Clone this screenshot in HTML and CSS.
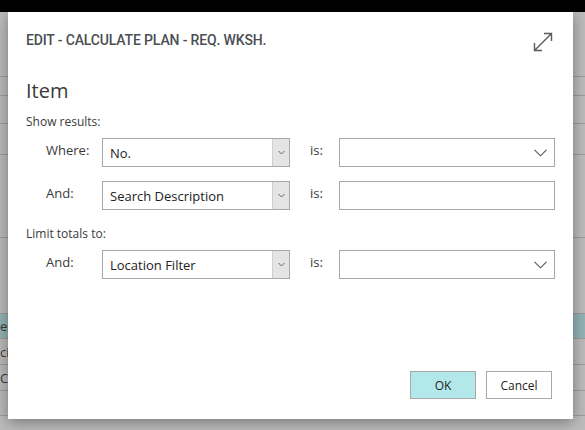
FILE: index.html
```html
<!DOCTYPE html>
<html>
<head>
<meta charset="utf-8">
<link rel="stylesheet" href="styles.css">
</head>
<body>
<div class="topbar"></div>
<div class="backdrop">
  <div class="brow h65"></div>
  <div class="brow h19"></div>
  <div class="brow h28"></div>
  <div class="brow h31"></div>
  <div class="brow h83"></div>
  <div class="brow h76"></div>
  <div class="brow h25 sel"><span class="btext">es</span></div>
  <div class="brow h26"><span class="btext">cia</span></div>
  <div class="brow h26"><span class="btext">C</span></div>
  <div class="brow h25"></div>
</div>

<div class="dialog">
  <div class="dhead">
    <div class="dtitle">EDIT - CALCULATE PLAN - REQ. WKSH.</div>
    <svg class="expand" width="22" height="22" viewBox="0 0 22 22">
      <path d="M2.5 19.5 L19.5 2.5 M12 2.5 H19.5 V10 M2.5 12 V19.5 H10" fill="none" stroke="#5a5a5a" stroke-width="1.4"/>
    </svg>
  </div>
  <div class="section-title">Item</div>
  <div class="group-label">Show results:</div>
  <div class="frow">
    <span class="flabel">Where:</span>
    <div class="select"><span class="sval">No.</span><span class="sbtn"><svg width="7" height="5" viewBox="0 0 7 5"><path d="M0.5 1 L3.5 4 L6.5 1" fill="none" stroke="#666" stroke-width="1"/></svg></span></div>
    <span class="islabel">is:</span>
    <div class="vbox"><svg class="chev" width="13" height="8" viewBox="0 0 13 8"><path d="M0.5 0.8 L6.5 6.8 L12.5 0.8" fill="none" stroke="#555" stroke-width="1.1"/></svg></div>
  </div>
  <div class="frow">
    <span class="flabel">And:</span>
    <div class="select"><span class="sval">Search Description</span><span class="sbtn"><svg width="7" height="5" viewBox="0 0 7 5"><path d="M0.5 1 L3.5 4 L6.5 1" fill="none" stroke="#666" stroke-width="1"/></svg></span></div>
    <span class="islabel">is:</span>
    <div class="vbox"></div>
  </div>
  <div class="group-label second">Limit totals to:</div>
  <div class="frow">
    <span class="flabel">And:</span>
    <div class="select"><span class="sval">Location Filter</span><span class="sbtn"><svg width="7" height="5" viewBox="0 0 7 5"><path d="M0.5 1 L3.5 4 L6.5 1" fill="none" stroke="#666" stroke-width="1"/></svg></span></div>
    <span class="islabel">is:</span>
    <div class="vbox"><svg class="chev" width="13" height="8" viewBox="0 0 13 8"><path d="M0.5 0.8 L6.5 6.8 L12.5 0.8" fill="none" stroke="#555" stroke-width="1.1"/></svg></div>
  </div>
  <div class="spacer"></div>
  <div class="actions">
    <button class="btn primary">OK</button>
    <button class="btn">Cancel</button>
  </div>
</div>
</body>
</html>
```
FILE: styles.css
```css
* { box-sizing: border-box; }
html, body { margin: 0; padding: 0; }
body {
  width: 585px;
  height: 430px;
  overflow: hidden;
  background: #bcbcbc;
  font-family: "Open Sans", "Noto Sans", sans-serif;
  position: relative;
}
.topbar { height: 12px; background: #000; }
.backdrop { display: flex; flex-direction: column; }
.brow {
  border-bottom: 1px solid #9c9c9c;
  font-size: 13px;
  color: #3a3a3a;
  display: flex;
  align-items: center;
  overflow: hidden;
  white-space: nowrap;
}
.btext { margin-left: 0; }
.brow.sel { background: #93b4b6; }
.h65 { height: 65px; }
.h19 { height: 19px; }
.h28 { height: 28px; }
.h31 { height: 31px; }
.h83 { height: 83px; }
.h76 { height: 76px; }
.h25 { height: 25px; }
.h26 { height: 26px; }

.dialog {
  position: absolute;
  left: 8px;
  top: 12px;
  width: 565px;
  height: 407px;
  background: #fff;
  box-shadow: 0 3px 14px rgba(0,0,0,0.38);
  padding: 0 18px;
  display: flex;
  flex-direction: column;
}
.dhead {
  display: flex;
  justify-content: space-between;
  align-items: center;
  padding-top: 5px;
  height: 51px;
}
.dtitle {
  font-family: "Roboto", sans-serif;
  font-weight: 500;
  font-size: 14px;
  color: #4b4f54;
  letter-spacing: -0.15px;
}
.expand { margin-right: 1px; margin-top: 4px; }
.section-title {
  font-size: 20px;
  color: #3a3a3a;
  margin-top: 15px;
  line-height: 26px;
}
.group-label {
  font-size: 12px;
  color: #3a3a3a;
  margin-top: 10px;
  line-height: 16px;
}
.group-label.second { margin-top: 10px; }
.frow {
  display: flex;
  align-items: center;
  height: 29px;
  margin-top: 8px;
  margin-bottom: 6px;
}
.flabel {
  width: 76px;
  padding-left: 20px;
  font-size: 13px;
  color: #3a3a3a;
  align-self: flex-start;
  margin-top: 3px;
}
.select {
  width: 188px;
  height: 29px;
  border: 1px solid #a8a8a8;
  display: flex;
  align-items: stretch;
}
.sval {
  flex: 1;
  font-size: 13px;
  color: #222;
  padding-left: 7px;
  display: flex;
  align-items: center;
  padding-top: 1px;
}
.sbtn {
  width: 17px;
  background: #e4e4e4;
  border-left: 1px solid #cfcfcf;
  display: flex;
  align-items: center;
  justify-content: center;
}
.islabel {
  width: 49px;
  padding-left: 20px;
  font-size: 13px;
  color: #3a3a3a;
  align-self: flex-start;
  margin-top: 3px;
}
.vbox {
  width: 216px;
  height: 29px;
  border: 1px solid #a8a8a8;
  display: flex;
  align-items: center;
  justify-content: flex-end;
  padding-right: 7px;
}
.spacer { flex: 1; }
.actions {
  display: flex;
  justify-content: flex-end;
  gap: 10px;
  padding-right: 3px;
  margin-bottom: 20px;
}
.btn {
  width: 66px;
  height: 28px;
  border: 1px solid #a8a8a8;
  background: #fff;
  font-family: "Open Sans", "Noto Sans", sans-serif;
  font-size: 12px;
  color: #222;
  padding: 0;
}
.btn.primary { background: #b3e8eb; }
```
